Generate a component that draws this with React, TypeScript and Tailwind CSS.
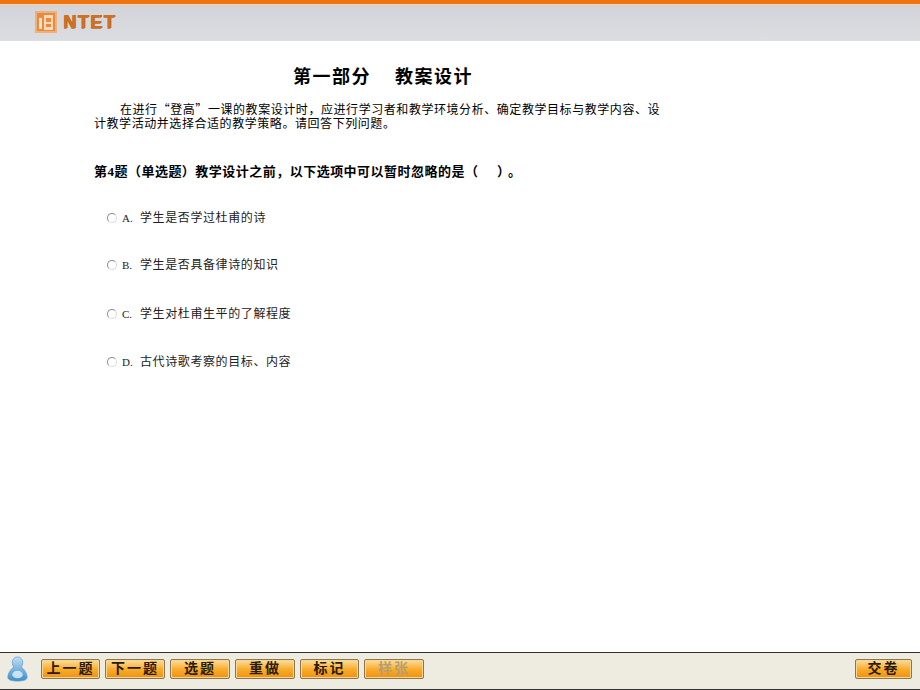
const SERIF = '"Liberation Serif", "Noto Sans CJK SC", serif'
const CJK = '"Noto Sans CJK SC", serif'

const OPTIONS = [
  { key: 'A.', text: '学生是否学过杜甫的诗', mt: 'mt-[31px]' },
  { key: 'B.', text: '学生是否具备律诗的知识', mt: 'mt-[31px]' },
  { key: 'C.', text: '学生对杜甫生平的了解程度', mt: 'mt-[33px]' },
  { key: 'D.', text: '古代诗歌考察的目标、内容', mt: 'mt-[32px]' },
]

function ToolButton({ label, width, disabled }: { label: string; width: string; disabled?: boolean }) {
  return (
    <button
      className={`${width} h-[20px] shrink-0 flex items-center justify-center rounded-[2px] border border-[#8a7650] bg-gradient-to-b from-[#fbdc96] via-[#f9ae28] to-[#ee8f14] text-[14px] font-bold leading-none tracking-[2px] shadow-[inset_0_0_0_1px_#f7d794] ${disabled ? 'text-[#b59e72]' : 'text-[#2a1a08]'}`}
      disabled={disabled}
    >
      {label}
    </button>
  )
}

function Radio() {
  return (
    <span className="w-[10px] h-[10px] shrink-0 rounded-full border border-[#8a8a8a] border-b-[#d8d8d8] border-r-[#d8d8d8] bg-white" />
  )
}

function Logo() {
  return (
    <div className="flex items-center gap-[6px]">
      <svg width="22" height="22" viewBox="0 0 22 22">
        <rect width="22" height="22" fill="#f0b078" />
        <rect x="2" y="2" width="18" height="18" fill="#e98a3e" />
        <rect x="4" y="7" width="3" height="11" fill="#fde3c8" />
        <path d="M9 4h9v15H9z M11 7v4h5V7z M11 13v3h5v-3z" fill="#fbd9b6" fillRule="evenodd" />
      </svg>
      <span
        className="text-[18px] font-bold leading-none text-[#d2701e] tracking-[1.5px] [text-shadow:1px_0_0_#a8642a,0_1px_0_#b9854e]"
        style={{ fontFamily: '"Liberation Sans", sans-serif' }}
      >
        NTET
      </span>
    </div>
  )
}

function Avatar() {
  return (
    <svg width="21" height="26" viewBox="0 0 24 28" preserveAspectRatio="none">
      <defs>
        <linearGradient id="av" x1="0" y1="0" x2="0" y2="1">
          <stop offset="0" stopColor="#bfe0f5" />
          <stop offset="1" stopColor="#3d8ccb" />
        </linearGradient>
      </defs>
      <path
        d="M12 1c4 0 6 3 6 6 0 2-1 4-2 5 4 2 7 7 7 11 0 3-5 4-11 4S1 26 1 23c0-4 3-9 7-11-1-1-2-3-2-5 0-3 2-6 6-6z"
        fill="url(#av)"
        stroke="#5a9ccf"
        strokeWidth="0.8"
      />
      <ellipse cx="12" cy="20" rx="6" ry="4" fill="#e3f2fb" opacity="0.8" />
    </svg>
  )
}

export default function App() {
  return (
    <div className="w-[920px] h-[690px] flex flex-col bg-white text-black overflow-hidden" style={{ fontFamily: SERIF }}>
      {/* Header */}
      <div className="h-[41px] shrink-0 flex flex-col bg-gradient-to-b from-[#d2d3d8] to-[#dcdde1]">
        <div className="h-[4px] bg-[#ee7410]" />
        <div className="h-[1px] bg-[#f7cfa8]" />
        <div className="flex-1 flex items-start pl-[35px] pt-[6px]">
          <Logo />
        </div>
      </div>

      {/* Content */}
      <div className="flex-1 pl-[94px] pr-[258px]">
        <h1 className="mt-[26px] pl-[199px] text-[18px] font-bold leading-[20px] tracking-[1.5px] whitespace-pre">
          第一部分{'    '}教案设计
        </h1>
        <p className="mt-[15px] text-[12px] leading-[14px] tracking-[0.56px] indent-[26px]" style={{ fontFamily: CJK }}>
          在进行“登高”一课的教案设计时，应进行学习者和教学环境分析、确定教学目标与教学内容、设计教学活动并选择合适的教学策略。请回答下列问题。
        </p>
        <p className="mt-[35px] text-[13px] font-bold leading-[14px] tracking-[0.48px] whitespace-pre">
          第4题（单选题）教学设计之前，以下选项中可以暂时忽略的是（{'     '}）<span className="ml-[4px]">。</span>
        </p>
        <div className="flex flex-col">
          {OPTIONS.map(o => (
            <div key={o.key} className={`${o.mt} pl-[13px] h-[16px] flex items-center text-[12px] tracking-[0.6px] text-[#222]`}>
              <Radio />
              <span className="ml-[5px] w-[18px] text-[11px] tracking-normal">{o.key}</span>
              <span>{o.text}</span>
            </div>
          ))}
        </div>
      </div>

      {/* Footer toolbar */}
      <div className="h-[38px] shrink-0 flex items-center border-t border-b border-[#333] bg-[#eeece0] pl-[7px] pr-[8px] pb-[4px]">
        <Avatar />
        <div className="ml-[13px] flex gap-[5px]">
          <ToolButton label="上一题" width="w-[59px]" />
          <ToolButton label="下一题" width="w-[60px]" />
          <ToolButton label="选题" width="w-[60px]" />
          <ToolButton label="重做" width="w-[60px]" />
          <ToolButton label="标记" width="w-[59px]" />
          <ToolButton label="样张" width="w-[60px]" disabled />
        </div>
        <div className="ml-auto">
          <ToolButton label="交卷" width="w-[57px]" />
        </div>
      </div>
    </div>
  )
}
